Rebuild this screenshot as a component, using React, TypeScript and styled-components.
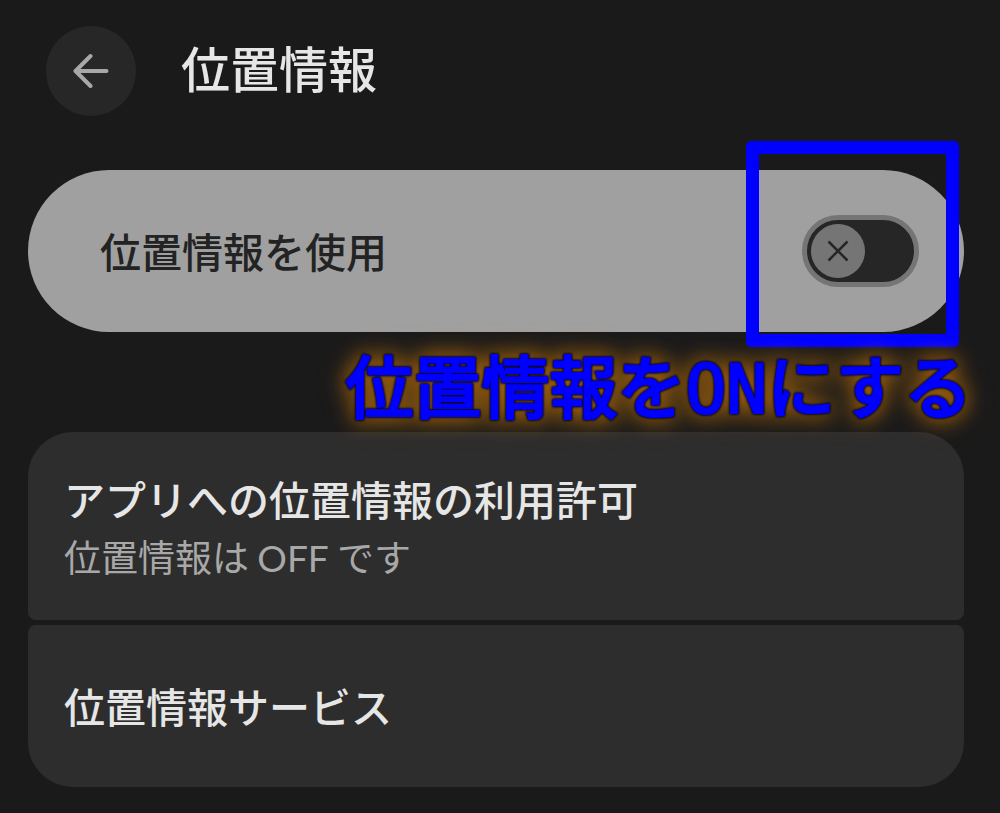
import React, { useState } from 'react';
import styled, { createGlobalStyle } from 'styled-components';

const GlobalStyle = createGlobalStyle`
  *, *::before, *::after { box-sizing: border-box; }
  body {
    margin: 0;
    background: #1a1a1a;
    color: #e6e6e6;
    font-family: "Noto Sans CJK JP", "Noto Sans", sans-serif;
  }
`;

const Page = styled.main`
  padding: 26px 36px 26px 28px;
`;

const Header = styled.header`
  display: flex;
  align-items: center;
  gap: 45px;
  padding-left: 18px;
  margin-bottom: 54px;
`;

const BackButton = styled.button`
  display: flex;
  align-items: center;
  justify-content: center;
  width: 90px;
  height: 90px;
  padding: 0;
  border: 0;
  border-radius: 50%;
  background: #272727;
  color: #a8a8a8;
`;

const Title = styled.h1`
  margin: 0;
  padding-bottom: 8px;
  font-size: 49px;
  line-height: 80px;
  font-weight: 500;
`;

const SwitchCard = styled.section`
  display: flex;
  align-items: center;
  justify-content: space-between;
  padding: 45px 45px 45px 72px;
  border-radius: 81px;
  background: #a0a0a0;
  color: #232323;
`;

const SwitchLabel = styled.label`
  padding-bottom: 2px;
  font-size: 41px;
  line-height: 60px;
  font-weight: 500;
`;

const SwitchFrame = styled.div`
  position: relative;
  display: grid;
`;

const SwitchInput = styled.input`
  grid-area: 1 / 1;
  appearance: none;
  width: 117px;
  height: 72px;
  margin: 0;
  border: 5px solid #757575;
  border-radius: 36px;
  background: #262626;
`;

const Thumb = styled.span<{ $on: boolean }>`
  grid-area: 1 / 1;
  align-self: center;
  justify-self: ${({ $on }) => ($on ? 'end' : 'start')};
  display: flex;
  align-items: center;
  justify-content: center;
  width: 54px;
  height: 54px;
  margin: 0 9px;
  border-radius: 50%;
  background: #757575;
  color: #262626;
  pointer-events: none;
`;

const Highlight = styled.div`
  position: absolute;
  inset: -74px -40px -60px -56px;
  border: 13px solid #0000ff;
  border-radius: 5px;
  pointer-events: none;
`;

const Caption = styled.p`
  position: relative;
  z-index: 1;
  margin: 0 -8px 0 0;
  padding: 10px 0 6px;
  line-height: 84px;
  font-size: 68px;
  font-weight: 500;
  text-align: right;
  white-space: nowrap;
  color: #0000ff;
  -webkit-text-stroke: 2px #0000ff;
  filter: drop-shadow(0 0 1px #00001c) drop-shadow(0 0 1px #00001c)
    drop-shadow(0 0 10px rgba(255, 148, 0, 0.5)) drop-shadow(0 0 12px rgba(255, 148, 0, 0.3));
  pointer-events: none;
`;

const CaptionLatin = styled.span`
  font-family: "DejaVu Sans Mono", monospace;
  line-height: 1;
`;

const List = styled.nav`
  display: flex;
  flex-direction: column;
  gap: 5px;
`;

const ListItem = styled.a`
  display: flex;
  flex-direction: column;
  justify-content: center;
  padding: 36px;
  border-radius: 8px;
  background: #2d2d2d;
  color: inherit;
  text-decoration: none;

  &:first-child {
    border-top-left-radius: 45px;
    border-top-right-radius: 45px;
  }
  &:last-child {
    padding: 50px 36px 52px;
    border-bottom-left-radius: 45px;
    border-bottom-right-radius: 45px;
  }
`;

const ItemTitle = styled.span`
  font-size: 41px;
  line-height: 60px;
  font-weight: 500;
`;

const ItemNote = styled.span`
  font-size: 37px;
  line-height: 56px;
  font-weight: 400;
  color: #a8a8a8;
`;

const NoteLatin = styled.span`
  font-family: Lato, sans-serif;
  line-height: 1;
`;

const BackArrow = () => (
  <svg width="36" height="36" viewBox="0 0 36 36" fill="none" stroke="currentColor" strokeWidth="4" strokeLinecap="round" strokeLinejoin="round" aria-hidden="true">
    <path d="M33.500 18H3M17.500 3L2.500 18L17.500 33" />
  </svg>
);

const Cross = () => (
  <svg width="22" height="22" viewBox="0 0 22 22" fill="none" stroke="currentColor" strokeWidth="2.500" aria-hidden="true">
    <path d="M1.500 1.500L20.500 20.500M20.500 1.500L1.500 20.500" />
  </svg>
);

export default function App() {
  const [enabled, setEnabled] = useState(false);

  return (
    <>
      <GlobalStyle />
      <Page>
        <Header>
          <BackButton type="button" aria-label="戻る">
            <BackArrow />
          </BackButton>
          <Title>位置情報</Title>
        </Header>
        <SwitchCard>
          <SwitchLabel htmlFor="use-location">位置情報を使用</SwitchLabel>
          <SwitchFrame>
            <SwitchInput
              id="use-location"
              type="checkbox"
              role="switch"
              checked={enabled}
              onChange={(event) => setEnabled(event.target.checked)}
            />
            <Thumb $on={enabled}>{!enabled && <Cross />}</Thumb>
            <Highlight />
          </SwitchFrame>
        </SwitchCard>
        <Caption>
          位置情報を<CaptionLatin>ON</CaptionLatin>にする
        </Caption>
        <List>
          <ListItem href="#permissions">
            <ItemTitle>アプリへの位置情報の利用許可</ItemTitle>
            <ItemNote>
              位置情報は <NoteLatin>OFF</NoteLatin> です
            </ItemNote>
          </ListItem>
          <ListItem href="#services">
            <ItemTitle>位置情報サービス</ItemTitle>
          </ListItem>
        </List>
      </Page>
    </>
  );
}
